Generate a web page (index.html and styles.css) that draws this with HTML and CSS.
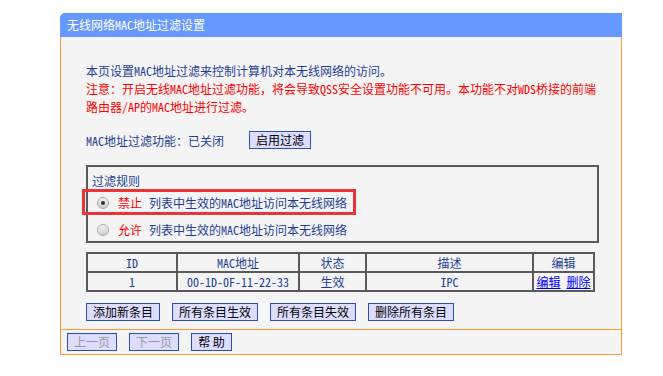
FILE: index.html
```html
<!DOCTYPE html>
<html>
<head>
  <meta charset="UTF-8">
  <title>无线网络MAC地址过滤设置</title>
  <link rel="stylesheet" href="styles.css">
</head>
<body>
  <div class="panel">
    <div class="panel-title">无线网络MAC地址过滤设置</div>

    <div class="panel-body">
      <p class="intro">
        本页设置MAC地址过滤来控制计算机对本无线网络的访问。<br>
        <span class="warn">注意：开启无线MAC地址过滤功能，将会导致QSS安全设置功能不可用。本功能不对WDS桥接的前端<br>路由器/AP的MAC地址进行过滤。</span>
      </p>

      <div class="status-row">
        <span class="status-label">MAC地址过滤功能：已关闭</span>
        <button class="btn" type="button">启用过滤</button>
      </div>

      <div class="rules">
        <div class="rules-title">过滤规则</div>
        <label class="rule">
          <span class="radio checked"></span>
          <span class="rule-key">禁止</span>
          <span>列表中生效的MAC地址访问本无线网络</span>
        </label>
        <label class="rule">
          <span class="radio"></span>
          <span class="rule-key">允许</span>
          <span>列表中生效的MAC地址访问本无线网络</span>
        </label>
        <span class="highlight"></span>
      </div>

      <table class="mac-table">
        <tr>
          <th class="col-id">ID</th>
          <th class="col-mac">MAC地址</th>
          <th class="col-state">状态</th>
          <th class="col-desc">描述</th>
          <th class="col-edit">编辑</th>
        </tr>
        <tr>
          <td>1</td>
          <td>00-1D-0F-11-22-33</td>
          <td>生效</td>
          <td>IPC</td>
          <td><a href="#">编辑</a> <a href="#">删除</a></td>
        </tr>
      </table>

      <div class="actions">
        <button class="btn" type="button">添加新条目</button>
        <button class="btn" type="button">所有条目生效</button>
        <button class="btn" type="button">所有条目失效</button>
        <button class="btn" type="button">删除所有条目</button>
      </div>
    </div>

    <div class="panel-foot">
      <button class="btn btn-off" type="button">上一页</button>
      <button class="btn btn-off" type="button">下一页</button>
      <button class="btn btn-help" type="button">帮 助</button>
    </div>
  </div>
</body>
</html>
```

FILE: styles.css
```css
body {
  margin: 0;
  background-color: white;
  font-family: "Noto Sans Mono CJK SC", "Noto Sans CJK SC", sans-serif;
  font-size: 12px;
  color: #1c3f94;
}

.panel {
  width: 562px;
  margin: 13px 0 0 60px;
}

.panel-title {
  height: 24px;
  line-height: 24px;
  padding-left: 7px;
  background-color: #6699ff;
  border-top-left-radius: 5px;
  color: white;
}

.panel-body {
  background-color: #f4f4f4;
  border-left: 1px solid #ff9933;
  border-right: 1px solid #ff9933;
  border-bottom: 1px solid #ff9933;
  padding: 25px 25px 8px 25px;
}

.intro {
  margin: 0;
  line-height: 18px;
  white-space: nowrap;
}

.warn {
  color: red;
}

.status-row {
  display: flex;
  align-items: center;
  margin-top: 15px;
  height: 18px;
}

.status-label {
  width: 163px;
}

.btn {
  height: 18px;
  padding: 0 6px;
  margin: 0;
  font-family: "Noto Sans CJK SC", sans-serif;
  font-size: 12px;
  line-height: 14px;
  color: black;
  background-color: #ddddff;
  border: 1px solid #2b4fb0;
  border-radius: 0;
}

.rules {
  position: relative;
  margin-top: 16px;
  width: 505px;
  height: 74px;
  border: 2px solid #5a5a5a;
  padding-left: 4px;
}

.rules-title {
  margin-top: 6px;
  line-height: 16px;
}

.rule {
  display: flex;
  align-items: center;
  height: 27px;
  padding-left: 5px;
}

.rule-key {
  color: red;
  margin: 0 7px 0 9px;
}

.radio {
  width: 10px;
  height: 10px;
  border: 1px solid #a8a8a8;
  border-radius: 50%;
  background: linear-gradient(#f2f2f2, #cfcfcf);
  position: relative;
}

.radio.checked::after {
  content: "";
  position: absolute;
  left: 3px;
  top: 3px;
  width: 4px;
  height: 4px;
  border-radius: 50%;
  background-color: #333;
}

.highlight {
  position: absolute;
  left: -6px;
  top: 22px;
  width: 268px;
  height: 20px;
  border: 3px solid #ee3333;
}

.mac-table {
  margin-top: 9px;
  width: 509px;
  border-collapse: collapse;
  border: 2px solid #5a5a5a;
}

.mac-table th,
.mac-table td {
  border: 2px solid #5a5a5a;
  height: 17px;
  padding: 0;
  text-align: center;
  font-weight: normal;
  line-height: 17px;
}

.col-id { width: 88px; }
.col-mac { width: 120px; }
.col-state { width: 65px; }
.col-desc { width: 165px; }

.mac-table a {
  color: #0000ff;
}

.actions {
  display: flex;
  gap: 12px;
  margin-top: 11px;
}

.panel-foot {
  display: flex;
  gap: 12px;
  padding: 3px 0 3px 6px;
  background-color: #f4f4f4;
  border-left: 1px solid #ff9933;
  border-right: 1px solid #ff9933;
  border-bottom: 1px solid #ff9933;
}

.btn-off {
  width: 50px;
  color: #999999;
}

.btn-help {
  width: 41px;
}
```
